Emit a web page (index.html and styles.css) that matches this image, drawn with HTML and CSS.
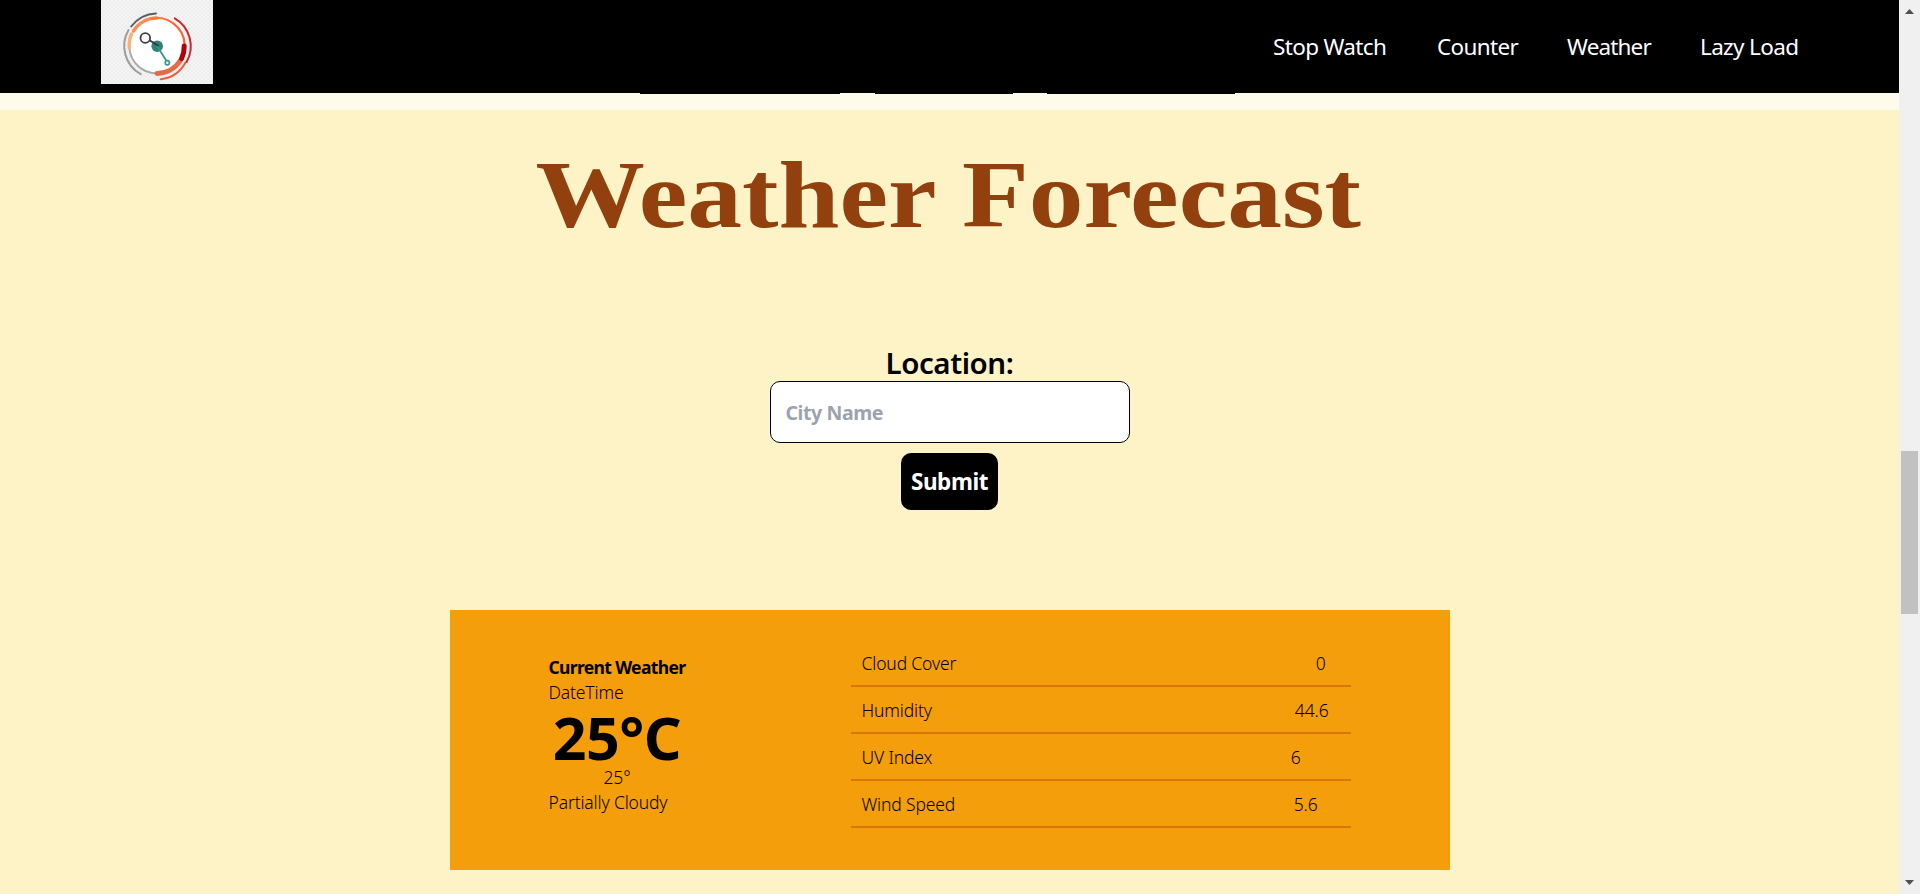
FILE: index.html
```
<!DOCTYPE html>
<html lang="en">
<head>
<meta charset="utf-8">
<title>Weather Forecast</title>
<link rel="stylesheet" href="styles.css">
</head>
<body>
<div class="page">
  <header class="header">
    <svg class="logo" viewBox="0 0 112 84" fill="none" stroke-linecap="round">
      <defs>
        <pattern id="grain" width="4" height="4" patternUnits="userSpaceOnUse">
          <path d="M0 0h2v2H0zM2 2h2v2H2z" fill="#ededed"/>
        </pattern>
        <linearGradient id="rim" x1="28" y1="48" x2="84" y2="44" gradientUnits="userSpaceOnUse">
          <stop offset="0" stop-color="#ffa76b"/>
          <stop offset=".4" stop-color="#ff7a35"/>
          <stop offset="1" stop-color="#f0683a"/>
        </linearGradient>
      </defs>
      <rect width="112" height="84" fill="#f4f4f4"/>
      <rect width="112" height="84" fill="url(#grain)"/>
      <circle cx="56" cy="45.7" r="27.5" fill="#fff"/>
      <path d="M28.4 48.5A27.7 27.7 0 0 0 55 73.4" stroke="#a9abab" stroke-width="2"/>
      <path d="M28.3 48A27.7 27.7 0 0 1 30.5 34" stroke="#ffae78" stroke-width="3.4"/>
      <path d="M32.5 31A27.7 27.7 0 0 1 56 18" stroke="#ff8d4d" stroke-width="3.4"/>
      <path d="M50 18.7A27.7 27.7 0 0 1 83.6 44" stroke="url(#rim)" stroke-width="2.2"/>
      <path d="M79.3 60.5A27.7 27.7 0 0 1 56 73.4" stroke="#e76b48" stroke-width="5"/>
      <path d="M83.2 46A27.7 27.7 0 0 1 80.6 58.5" stroke="#ad0505" stroke-width="5"/>
      <path d="M30.2 26.5A32.3 32.3 0 0 1 55 13.4" stroke="#5b5e69" stroke-width="2"/>
      <path d="M27.5 30A32.3 32.3 0 0 0 39.7 74.2" stroke="#9c9e9e" stroke-width="2"/>
      <path d="M84.5 62.5A32.3 32.3 0 0 1 59.7 79.2" stroke="#e9603f" stroke-width="2"/>
      <path d="M73.8 18.3A32.3 32.3 0 0 1 85.6 62" stroke="#c4282b" stroke-width="2"/>
      <circle cx="56.2" cy="46.2" r="5.8" fill="#2a8577"/>
      <path d="M56.2 46.2 65.2 60.5" stroke="#3f9489" stroke-width="1.8"/>
      <circle cx="66.3" cy="62.7" r="2.1" fill="#fff" stroke="#38998b" stroke-width="1.7"/>
      <path d="M48.5 40.2 57 45.5" stroke="#34363f" stroke-width="1.8"/>
      <circle cx="44.3" cy="38" r="4.8" fill="#fff" stroke="#3d3f48" stroke-width="1.8"/>
    </svg>
    <nav class="nav">
      <a class="nav-link stopwatch">Stop Watch</a>
      <a class="nav-link counter">Counter</a>
      <a class="nav-link weather">Weather</a>
      <a class="nav-link lazy">Lazy Load</a>
    </nav>
  </header>
  <section class="counter-end">
    <div class="edge start"></div>
    <div class="edge reset"></div>
    <div class="edge stop"></div>
  </section>
  <main class="forecast">
    <h1 class="title">Weather Forecast</h1>
    <form class="search">
      <label class="label" for="city">Location:</label>
      <input class="city" id="city" type="text" placeholder="City Name">
      <button class="submit" type="button">Submit</button>
    </form>
    <section class="card">
      <div class="current">
        <div class="heading">Current Weather</div>
        <div>DateTime</div>
        <div class="temp">25°C</div>
        <div class="feels">25°</div>
        <div>Partially Cloudy</div>
      </div>
      <div class="details">
        <div class="row cloud"><span>Cloud Cover</span><span>0</span></div>
        <div class="row humidity"><span>Humidity</span><span>44.6</span></div>
        <div class="row uv"><span>UV Index</span><span>6</span></div>
        <div class="row wind"><span>Wind Speed</span><span>5.6</span></div>
      </div>
    </section>
  </main>
</div>
<aside class="scrollbar">
  <svg class="arrow" viewBox="0 0 21 21"><path d="M6 14h9l-4.5-5z"/></svg>
  <div class="thumb"></div>
  <svg class="arrow" viewBox="0 0 21 21"><path d="M6 7h9l-4.5 5z"/></svg>
</aside>
</body>
</html>
```
FILE: styles.css
```
* { box-sizing: border-box; }
body {
  margin: 0;
  height: 894px;
  display: flex;
  overflow: hidden;
  font-family: "Noto Sans", "Open Sans", sans-serif;
  color: #000;
}
.page { width: 1899px; height: 894px; display: flex; flex-direction: column; }

.header {
  height: 93px;
  background: #000;
  display: flex;
  justify-content: space-between;
  align-items: flex-start;
  padding: 0 101px;
}
.logo { width: 112px; height: 84px; display: block; }
.nav { display: flex; gap: 49px; height: 93px; align-items: center; }
.nav-link { color: #fff; font-size: 22.5px; line-height: 35px; letter-spacing: -.65px; white-space: nowrap; }
.nav-link.stopwatch { width: 115px; }
.nav-link.counter { width: 81px; }
.nav-link.weather { width: 84px; letter-spacing: -.85px; }
.nav-link.lazy { width: 98px; }

.counter-end { height: 17px; background: #fffbeb; display: flex; padding-left: 640px; }
.edge { height: 1px; background: #000; }
.edge.start { width: 200px; margin-right: 35px; }
.edge.reset { width: 138px; margin-right: 34px; }
.edge.stop { width: 188px; }

.forecast {
  flex: 1;
  background: #fef3c7;
  display: flex;
  flex-direction: column;
  align-items: center;
  padding-top: 40px;
}
.title {
  margin: 0;
  height: 90px;
  padding-right: 2px;
  font: 700 95px/90px "Liberation Serif", serif;
  color: #92400e;
  transform: scaleX(1.152);
  white-space: nowrap;
}
.search {
  margin-top: 101px;
  width: 360px;
  display: flex;
  flex-direction: column;
  align-items: center;
}
.label { height: 40px; font-size: 29.5px; line-height: 43px; font-weight: 600; letter-spacing: -.45px; }
.city {
  width: 360px;
  height: 62px;
  border: 1px solid #000;
  border-radius: 10px;
  background: #fff;
  padding: 0 15px;
  font: 700 19.5px/30px "Noto Sans", sans-serif;
  letter-spacing: -.4px;
}
.city::placeholder { color: #9ca3af; opacity: 1; }
.submit {
  margin-top: 10px;
  width: 97px;
  height: 57px;
  padding: 0;
  border: 0;
  border-radius: 10px;
  background: #000;
  color: #fff;
  font: 700 22.5px/35px "Noto Sans", sans-serif;
  letter-spacing: -.45px;
}

.card {
  margin-top: 100px;
  width: 1000px;
  height: 260px;
  background: #f59e0b;
  display: flex;
  justify-content: space-between;
  padding: 30px 99px 0 98px;
  font-size: 17.5px;
  line-height: 25px;
  font-weight: 300;
  letter-spacing: -.15px;
}
.current { width: 138px; padding: 15px 0 0 1px; white-space: nowrap; }
.heading { font-weight: 700; letter-spacing: -.65px; }
.temp { height: 60px; font-size: 59px; line-height: 64px; font-weight: 700; letter-spacing: -.5px; text-align: center; }
.feels { text-align: center; }
.details { width: 500px; }
.row {
  height: 47px;
  display: flex;
  justify-content: space-between;
  padding: 11px 0 0 11px;
  border-bottom: 2px solid #d97706;
}
.row.cloud { padding-right: 25px; }
.row.humidity { padding-right: 22px; }
.row.uv { padding-right: 50px; }
.row.wind { padding-right: 33px; }

.scrollbar {
  width: 21px;
  height: 894px;
  background: #f0f0f0;
  display: flex;
  flex-direction: column;
}
.arrow { width: 21px; height: 21px; fill: #505050; }
.thumb { width: 17px; height: 163px; margin: 430px 2px 0; background: #c1c1c1; }
.thumb + .arrow { margin-top: auto; }
```
